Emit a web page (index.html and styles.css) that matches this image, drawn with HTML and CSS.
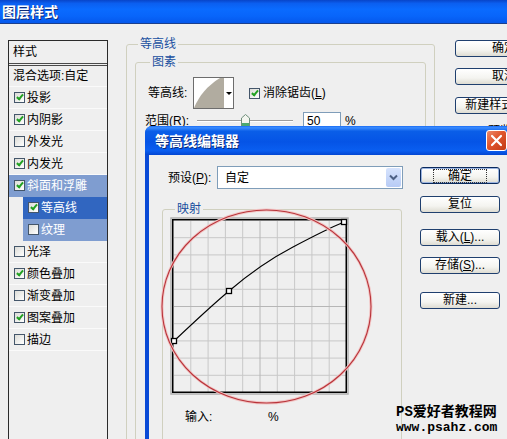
FILE: index.html
```html
<!DOCTYPE html>
<html>
<head>
<meta charset="utf-8">
<link rel="stylesheet" href="styles.css">
</head>
<body>
<div class="win">
  <div class="titlebar"><span class="title">图层样式</span></div>
  <div class="winbody">
    <div class="stylelist">
      <div class="head">样式</div>
      <div class="blend">混合选项:自定</div>
      <div class="li"><span class="cb on"></span>投影</div>
      <div class="li"><span class="cb on"></span>内阴影</div>
      <div class="li"><span class="cb"></span>外发光</div>
      <div class="li"><span class="cb on"></span>内发光</div>
      <div class="li sel1"><span class="cb on"></span>斜面和浮雕</div>
      <div class="li sub sel2"><span class="cb on"></span>等高线</div>
      <div class="li sub sel1"><span class="cb"></span>纹理</div>
      <div class="li"><span class="cb"></span>光泽</div>
      <div class="li"><span class="cb on"></span>颜色叠加</div>
      <div class="li"><span class="cb"></span>渐变叠加</div>
      <div class="li"><span class="cb on"></span>图案叠加</div>
      <div class="li"><span class="cb"></span>描边</div>
    </div>
    <fieldset class="grp contour">
      <legend>等高线</legend>
      <fieldset class="grp elem">
        <legend>图素</legend>
        <div class="r1">
          <span class="lbl1">等高线:</span>
          <div class="thumb">
            <svg width="30" height="30" viewBox="0 0 30 30"><path d="M0,30 C5,18 13,8 26,0 L30,0 L30,30 Z" fill="#b1aca0"/></svg>
            <span class="tarrow"><span class="tri"></span></span>
          </div>
          <span class="cb on aa"></span><span>消除锯齿(<u>L</u>)</span>
        </div>
        <div class="r2">
          <span class="lbl2">范围(<u>R</u>):</span>
          <div class="slider">
            <div class="track"></div>
            <svg class="knob" width="9" height="13" viewBox="0 0 9 13"><path d="M0.5,4 L4.5,0.5 L8.5,4 L8.5,12.5 L0.5,12.5 Z" fill="#f3f5ef" stroke="#6f8f7c"/><rect x="1" y="9" width="7" height="3" fill="#4aa870"/></svg>
          </div>
          <div class="field">50</div>
          <span class="pct">%</span>
        </div>
      </fieldset>
    </fieldset>
    <div class="btns">
      <div class="btn">确定</div>
      <div class="btn b2">取消</div>
      <div class="btn b3">新建样式(<u>W</u>)...</div>
      <div class="prev"><span class="cb on"></span>预览(<u>V</u>)</div>
    </div>
  </div>
</div>

<div class="dlg">
  <div class="dlg-title">
    <span class="dtitle">等高线编辑器</span>
    <span class="close"><svg width="21" height="21" viewBox="0 0 21 21"><path d="M6,6 L15,15 M15,6 L6,15" stroke="#fff" stroke-width="2.2" stroke-linecap="round"/></svg></span>
  </div>
  <div class="dlg-body">
    <div class="dcol">
      <div class="preset">
        <span class="plbl">预设(<u>P</u>):</span>
        <div class="select"><span class="stext">自定</span><span class="sarrow"><svg width="9" height="7" viewBox="0 0 9 7"><path d="M1,1.5 L4.5,5 L8,1.5" fill="none" stroke="#4d6185" stroke-width="2"/></svg></span></div>
      </div>
      <fieldset class="grp map">
        <legend>映射</legend>
        <svg class="graph" width="179" height="178" viewBox="0 0 179 178">
          <rect x="1" y="1" width="177" height="176" fill="#efefef" stroke="#b0b0b0" stroke-width="1.5"/>
          <g stroke="#c8c8c8" stroke-width="1">
            <path d="M20.8,4 V175 M38.1,4 V175 M55.4,4 V175 M72.7,4 V175 M107.3,4 V175 M124.6,4 V175 M141.9,4 V175 M159.2,4 V175"/>
            <path d="M4,20.7 H176 M4,37.9 H176 M4,55.1 H176 M4,72.3 H176 M4,106.7 H176 M4,123.9 H176 M4,141.1 H176 M4,158.3 H176"/>
          </g>
          <path d="M90,4 V175 M4,89.5 H176" stroke="#b6b6b6" stroke-width="1"/>
          <rect x="2.75" y="2.75" width="173.5" height="172.5" fill="none" stroke="#000" stroke-width="1.5"/>
          <path d="M4,124 C22,107 40,90 59,74 C80,56 100,42 123,30 C140,21 157,12 174,5" fill="none" stroke="#000" stroke-width="1.1"/>
          <rect x="1.5" y="121.5" width="5" height="5" fill="#fff" stroke="#000" stroke-width="1.3"/>
          <rect x="56.5" y="71.5" width="5" height="5" fill="#fff" stroke="#000" stroke-width="1.3"/>
          <rect x="171.5" y="2.5" width="5" height="5" fill="#fff" stroke="#000" stroke-width="1.3"/>
        </svg>
        <div class="inrow"><span class="inlbl">输入:</span><span>%</span></div>
      </fieldset>
    </div>
    <div class="dbtns">
      <div class="btn dbtn def"><span class="focus">确定</span></div>
      <div class="btn dbtn g1">复位</div>
      <div class="btn dbtn g2">载入(<u>L</u>)...</div>
      <div class="btn dbtn g3">存储(<u>S</u>)...</div>
      <div class="btn dbtn g4">新建...</div>
    </div>
  </div>
</div>

<svg class="mark" width="507" height="439" viewBox="0 0 507 439">
  <ellipse cx="266.5" cy="306.5" rx="104.5" ry="96.5" fill="none" stroke="#f2c4c4" stroke-width="3"/>
  <ellipse cx="266.5" cy="306.5" rx="104.5" ry="96.5" fill="none" stroke="#b8343a" stroke-width="1.1"/>
</svg>

<div class="wm">
  <div class="wm1">PS爱好者教程网</div>
  <div class="wm2">www.psahz.com</div>
</div>
</body>
</html>
```

FILE: styles.css
```css
html, body {
  margin: 0;
  padding: 0;
}
body {
  width: 507px;
  height: 439px;
  overflow: hidden;
  position: relative;
  background: #efefef;
  color: #000;
  font-family: "Liberation Sans", "Noto Sans CJK SC", sans-serif;
  font-size: 12px;
  line-height: 16px;
}
u { text-decoration: underline; }

.win {
  display: flex;
  flex-direction: column;
  height: 439px;
  overflow: hidden;
}
.titlebar {
  height: 23px;
  flex-shrink: 0;
  border-bottom: 1px solid #1b3f8c;
  background: linear-gradient(to bottom, #0845c9 0%, #0b5ff0 15%, #0a6bff 40%, #0865fa 70%, #0558ec 100%);
  display: flex;
  align-items: center;
  padding-left: 2px;
}
.title {
  color: #fff;
  font-weight: bold;
  font-size: 14px;
  text-shadow: 1px 1px 0 #0b2a7a;
}
.winbody {
  flex: 1;
  display: flex;
  align-items: flex-start;
  padding-left: 8px;
  min-height: 0;
}

/* style list */
.stylelist {
  flex-shrink: 0;
  align-self: stretch;
  margin-top: 16px;
  width: 100px;
  box-sizing: border-box;
  border: 1px solid #2b2b2b;
  border-bottom: none;
}
.head {
  height: 22px;
  line-height: 22px;
  padding-left: 4px;
  border-bottom: 3px double #4a4a4a;
}
.blend {
  height: 20px;
  line-height: 20px;
  padding-left: 4px;
  border-bottom: 1px solid #fafafa;
}
.li {
  height: 21px;
  display: flex;
  align-items: center;
  padding-left: 5px;
  border-bottom: 1px solid #fafafa;
}
.li .cb { margin-right: 2px; }
.sel1 {
  background: #7f9dd0;
  color: #fff;
  border-bottom-color: #7f9dd0;
}
.sel2 {
  background: #3166c0;
  color: #fff;
  border-bottom-color: #3166c0;
}
.sub { margin-left: 14px; }

/* checkbox */
.cb {
  display: inline-block;
  position: relative;
  flex-shrink: 0;
  width: 9px;
  height: 9px;
  border: 1px solid #44566a;
  background: linear-gradient(135deg, #dcdcd7, #ffffff);
}
.cb.on::after {
  content: "";
  position: absolute;
  left: 3px;
  top: 0px;
  width: 2px;
  height: 5px;
  border: solid #21a121;
  border-width: 0 2px 2px 0;
  transform: rotate(40deg);
}

/* groupboxes */
fieldset.grp {
  margin: 0;
  padding: 0;
  border: 1px solid #d0d0bf;
  border-radius: 3px;
  min-width: 0;
  box-sizing: border-box;
  flex-shrink: 0;
}
fieldset.grp > legend {
  padding: 0 2px;
  line-height: 16px;
  color: #1a50a0;
}
.contour {
  margin-left: 18px !important;
  margin-top: 12px !important;
  width: 309px;
  height: 440px;
}
.contour > legend { margin-left: 11px; }
.elem {
  margin: 2px 0 0 8px !important;
  width: 291px;
  height: 420px;
}
.elem > legend { margin-left: 14px; }

.r1 {
  display: flex;
  align-items: center;
  margin-top: 7px;
  height: 32px;
  padding-left: 12px;
}
.lbl1 { width: 45px; }
.thumb {
  display: flex;
  width: 41px;
  height: 32px;
  box-sizing: border-box;
  border: 1px solid #6d6d6d;
  background: #fff;
}
.thumb svg { display: block; }
.tarrow {
  flex: 1;
  display: flex;
  align-items: center;
  justify-content: center;
}
.tri {
  width: 0;
  height: 0;
  border-left: 3px solid transparent;
  border-right: 3px solid transparent;
  border-top: 3px solid #000;
}
.aa { margin-left: 15px; margin-right: 3px; }

.r2 {
  display: flex;
  align-items: center;
  height: 18px;
  margin-top: 3px;
  padding-left: 9px;
}
.lbl2 { width: 52px; }
.slider {
  position: relative;
  width: 96px;
  height: 18px;
  display: flex;
  align-items: center;
}
.track {
  width: 100%;
  height: 0;
  border-top: 1px solid #9d9d9d;
  border-bottom: 1px solid #fff;
}
.knob {
  position: absolute;
  left: 44px;
  top: 2px;
}
.field {
  margin-left: 10px;
  width: 38px;
  height: 18px;
  box-sizing: border-box;
  border: 1px solid #7f9db9;
  background: #fff;
  padding-left: 3px;
  line-height: 16px;
}
.pct { margin-left: 4px; }

/* buttons */
.btns {
  flex-shrink: 0;
  margin-left: 20px;
  margin-top: 16px;
  display: flex;
  flex-direction: column;
  align-items: flex-start;
}
.btn {
  flex-shrink: 0;
  width: 98px;
  height: 17px;
  box-sizing: border-box;
  border: 1px solid #1f3f6e;
  border-radius: 3px;
  background: linear-gradient(to bottom, #ffffff 0%, #f4f4f0 60%, #dedcd2 100%);
  display: flex;
  align-items: center;
  justify-content: center;
  line-height: 15px;
  white-space: nowrap;
}
.b2 { margin-top: 11px; }
.b3 { margin-top: 12px; }
.prev {
  margin-top: 9px;
  margin-left: 19px;
  display: flex;
  align-items: center;
  white-space: nowrap;
}
.prev .cb { margin-right: 3px; }

/* contour editor dialog */
.dlg {
  position: absolute;
  left: 145px;
  top: 126px;
  width: 367px;
  height: 330px;
  background: #0a4ad6;
  border-radius: 7px 7px 0 0;
  display: flex;
  flex-direction: column;
}
.dlg-title {
  height: 29px;
  flex-shrink: 0;
  border-radius: 7px 7px 0 0;
  background: linear-gradient(to bottom, #1a6cf4 0%, #3a8cff 6%, #0a5ee8 18%, #0554e6 55%, #0a5ef0 85%, #0346d2 100%);
  display: flex;
  align-items: center;
  padding-left: 10px;
}
.dtitle {
  color: #fff;
  font-weight: bold;
  font-size: 14px;
  text-shadow: 1px 1px 0 #0b2a7a;
}
.close {
  margin-left: auto;
  margin-right: 5px;
  width: 21px;
  height: 21px;
  box-sizing: border-box;
  border: 1px solid #fff;
  border-radius: 3px;
  background: linear-gradient(135deg, #ec8a6a 0%, #e0552c 45%, #c23a16 100%);
  overflow: hidden;
}
.close svg { display: block; margin: -1px; }
.dlg-body {
  flex: 1;
  margin: 0 4px;
  background: #efefef;
  display: flex;
  align-items: flex-start;
  overflow: hidden;
}
.dcol {
  width: 241px;
  margin-left: 13px;
  flex-shrink: 0;
}
.preset {
  display: flex;
  align-items: center;
  margin-top: 11px;
  height: 23px;
}
.plbl { margin-left: 6px; width: 49px; }
.select {
  width: 186px;
  height: 23px;
  box-sizing: border-box;
  border: 1px solid #7f9db9;
  background: #fff;
  display: flex;
  align-items: center;
}
.stext { flex: 1; padding-left: 7px; }
.sarrow {
  width: 15px;
  height: 19px;
  margin-right: 1px;
  border-radius: 2px;
  background: linear-gradient(to bottom, #d6e3fd, #b7cbf5);
  display: flex;
  align-items: center;
  justify-content: center;
}
.sarrow svg { display: block; }
.map {
  margin-top: 12px !important;
  width: 240px;
  height: 280px;
}
.map > legend { margin-left: 12px; }
.graph {
  display: block;
  margin-left: 7px;
}
.inrow {
  display: flex;
  margin-top: 14px;
  height: 16px;
  padding-left: 22px;
}
.inlbl { width: 83px; }
.dbtns {
  flex-shrink: 0;
  margin-left: 17px;
  margin-top: 12px;
  display: flex;
  flex-direction: column;
}
.dbtn { width: 80px; }
.def { border-color: #0a2a5e; box-shadow: inset 0 0 0 1px #9bb4e0; }
.focus {
  border: 1px dotted #333;
  padding: 0 14px;
  line-height: 12px;
}
.g1 { margin-top: 12px; }
.g2 { margin-top: 16px; }
.g3 { margin-top: 11px; }
.g4 { margin-top: 18px; }

/* overlays */
.mark {
  position: absolute;
  left: 0;
  top: 0;
  pointer-events: none;
}
.wm {
  position: absolute;
  left: 396px;
  top: 404px;
  font-family: "Liberation Mono", "Noto Sans CJK SC", monospace;
  font-weight: bold;
  color: #000;
}
.wm1 { font-size: 14px; line-height: 16px; }
.wm2 { font-size: 13px; line-height: 16px; }
```
